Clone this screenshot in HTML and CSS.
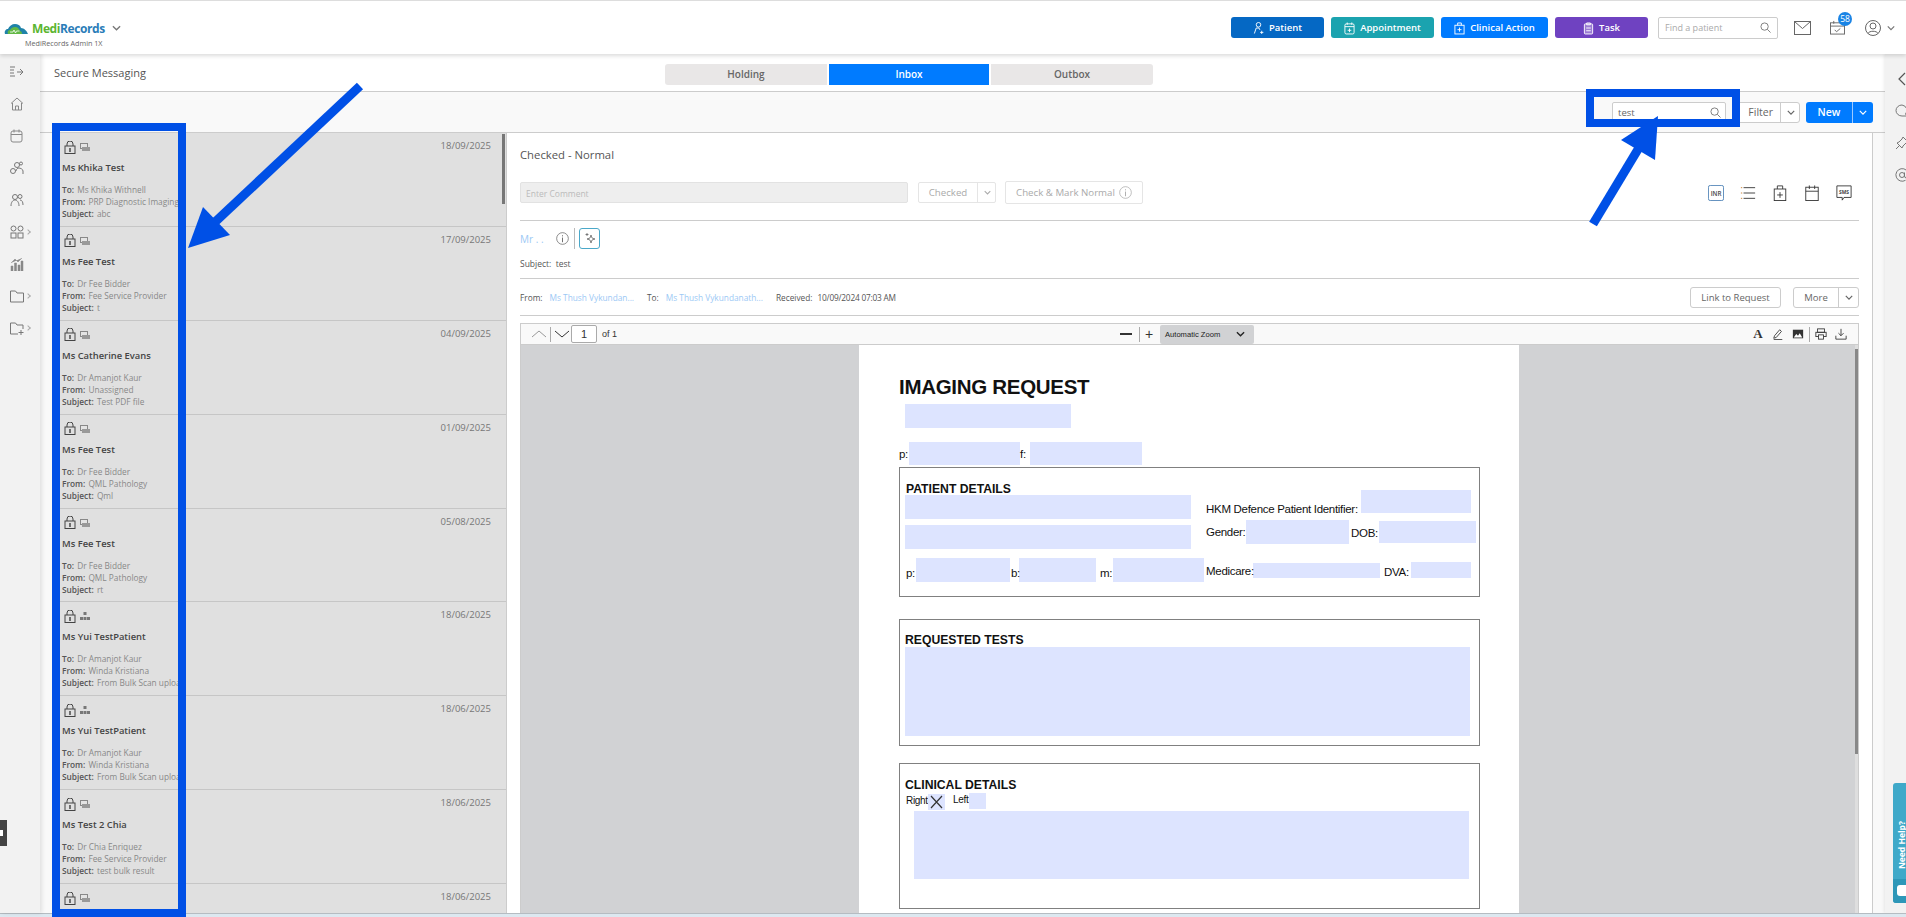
FILE: index.html
```html
<!DOCTYPE html>
<html lang="en">
<head>
    <meta charset="UTF-8">
    <title>MediRecords - Secure Messaging</title>
    <link rel="stylesheet" href="styles.css">
</head>
<body>
    <svg class="defs" width="0" height="0">
        <symbol id="i-lock" viewBox="0 0 12 13">
            <path d="M3 5V3a3 3 0 0 1 6 0v2" fill="none" stroke="#444"/>
            <rect x="1" y="5" width="10" height="7.5" fill="none" stroke="#444"/>
            <path d="M6 7v4" stroke="#222" stroke-width="1.2"/>
        </symbol>
        <symbol id="i-doc" viewBox="0 0 10 8">
            <rect x="0.5" y="0.5" width="7" height="5" fill="#e4e4e4" stroke="#888"/>
            <rect x="2" y="4" width="8" height="4" fill="#999"/>
        </symbol>
        <symbol id="i-net" viewBox="0 0 10 8">
            <path d="M3.5 0h3v3h-3zM0 5h3v3H0zM3.5 5h3v3h-3zM7 5h3v3H7z" fill="#777"/>
        </symbol>
        <symbol id="i-down" viewBox="0 0 10 6">
            <path d="M1 1l4 4 4-4" fill="none" stroke="currentColor" stroke-width="1.5"/>
        </symbol>
        <symbol id="i-search" viewBox="0 0 12 12">
            <circle cx="5" cy="5" r="4" fill="none" stroke="#777"/>
            <path d="M8 8l3.5 3.5" stroke="#777"/>
        </symbol>
        <symbol id="i-info" viewBox="0 0 14 14">
            <circle cx="7" cy="7" r="6.3" fill="none" stroke="currentColor" stroke-width="0.8"/>
            <path d="M7 6v5M7 3.5v1.2" stroke="currentColor"/>
        </symbol>
    </svg>

    <header class="topbar">
        <div class="brand">
            <div class="brand-row">
                <svg class="brand-cloud" viewBox="0 0 24 13">
                    <path d="M1 12c-1-3 1-5 3-5 1-3 4-5 7-5 3 0 5 1 6 4 3 0 6 3 7 6z" fill="#1f82a8"/>
                    <path d="M4 12c-1-2 0-4 2-4 1-2 3-3 5-3 3 0 4 2 5 4 1 0 2 1 2 3z" fill="#62b845"/>
                    <path d="M6 10h3l1-2 1.5 3 1-2h3" fill="none" stroke="#fff" stroke-width="0.8"/>
                </svg>
                <span class="brand-name"><span class="brand-medi">Medi</span>Records</span>
                <svg class="brand-down"><use href="#i-down"/></svg>
            </div>
            <div class="brand-sub">MediRecords Admin 1X</div>
        </div>

        <div class="top-actions">
            <button class="top-btn btn-patient">
                <svg viewBox="0 0 12 14"><circle cx="6" cy="3.5" r="2.5" fill="none" stroke="#fff"/><path d="M1.5 13l2-6h3l1 2M9.5 10v3.5M7.8 11.8h3.5" fill="none" stroke="#fff"/></svg>
                Patient
            </button>
            <button class="top-btn btn-appointment">
                <svg viewBox="0 0 12 14"><rect x="1" y="2.5" width="10" height="11" rx="1.5" fill="none" stroke="#fff"/><path d="M1 5.5h10M3.5 1v2.5M8.5 1v2.5M6 7.5v4M4 9.5h4" fill="none" stroke="#fff"/></svg>
                Appointment
            </button>
            <button class="top-btn btn-clinical">
                <svg viewBox="0 0 12 14"><rect x="1" y="4" width="10" height="9.5" fill="none" stroke="#fff"/><path d="M4 4V1.5h4V4M6 6.5V11M3.8 8.8h4.4" fill="none" stroke="#fff"/></svg>
                Clinical Action
            </button>
            <button class="top-btn btn-task">
                <svg viewBox="0 0 12 14"><rect x="1.5" y="2.5" width="9" height="11" rx="1" fill="#dcd0f0" fill-opacity="0.4" stroke="#fff"/><path d="M4 1.5h4v2H4zM3.5 7h5M3.5 10h5" fill="none" stroke="#fff"/></svg>
                Task
            </button>
            <div class="find">
                <span class="find-text">Find a patient</span>
                <svg class="find-icon"><use href="#i-search"/></svg>
            </div>
            <svg class="top-icon icon-mail" viewBox="0 0 17 14"><rect x="0.5" y="0.5" width="16" height="13" fill="none" stroke="#666"/><path d="M0.5 0.5l8 7 8-7" fill="none" stroke="#666"/></svg>
            <div class="tasks">
                <svg class="top-icon icon-cal" viewBox="0 0 16 15"><rect x="0.5" y="2.5" width="15" height="12" fill="none" stroke="#666"/><path d="M0.5 6h15M4 0.5v3M11 0.5v3M5 10l2 2 4-3.5" fill="none" stroke="#666"/></svg>
                <span class="badge">58</span>
            </div>
            <svg class="top-icon icon-user" viewBox="0 0 16 16"><circle cx="8" cy="8" r="7.5" fill="none" stroke="#666"/><circle cx="8" cy="6" r="3" fill="none" stroke="#666"/><path d="M3 13.5c1-3 9-3 10 0" fill="none" stroke="#666"/></svg>
            <svg class="user-down"><use href="#i-down"/></svg>
        </div>
    </header>

    <div class="middle">
        <nav class="sidebar">
            <svg class="side-icon" viewBox="0 0 14 12"><path d="M0 1h5M0 4h4M0 7h4M0 10h5M7 6h6M10 3l3 3-3 3" fill="none" stroke="#777"/></svg>
            <svg class="side-icon" viewBox="0 0 14 14"><path d="M1 6.5L7 1l6 5.5M2.5 6v7h9V6M5.5 13V9h3v4" fill="none" stroke="#888"/></svg>
            <svg class="side-icon" viewBox="0 0 14 14"><rect x="1" y="2" width="11" height="11" rx="2" fill="none" stroke="#888"/><path d="M1 5.5h11M4 0.5v3M9 0.5v3" fill="none" stroke="#888"/></svg>
            <svg class="side-icon" viewBox="0 0 14 14"><circle cx="3" cy="10" r="2.5" fill="none" stroke="#777"/><circle cx="7" cy="4" r="2.5" fill="none" stroke="#777"/><circle cx="11" cy="2.5" r="1.5" fill="none" stroke="#777"/><path d="M6 10c0-2 2-3 3-3s4 1 4 3v3" fill="none" stroke="#777"/></svg>
            <svg class="side-icon" viewBox="0 0 14 14"><circle cx="5" cy="4" r="2.5" fill="none" stroke="#777"/><circle cx="10" cy="3.5" r="2" fill="none" stroke="#777"/><path d="M1 13c0-4 2-6 4-6s4 2 4 6M10 7c2 0 3 2 3 5" fill="none" stroke="#777"/></svg>
            <div class="side-more">
                <svg class="side-icon" viewBox="0 0 14 14"><circle cx="3.5" cy="3.5" r="2.5" fill="none" stroke="#777"/><circle cx="10.5" cy="3.5" r="2.5" fill="none" stroke="#777"/><rect x="1" y="8" width="5" height="5" fill="none" stroke="#777"/><rect x="8" y="8" width="5" height="5" fill="none" stroke="#777"/></svg>
                <span class="side-arrow"></span>
            </div>
            <svg class="side-icon" viewBox="0 0 14 14"><path d="M1 9h2v5H1zM4.5 6h2v8h-2zM8 8h2v6H8zM11 4h2v10h-2zM1 6l4-4 3 3 4-4" fill="#888" stroke="#888" stroke-width="0.5"/></svg>
            <div class="side-more">
                <svg class="side-icon" viewBox="0 0 14 14"><path d="M0.5 2h5L7 4h6.5v9H0.5z" fill="none" stroke="#777"/></svg>
                <span class="side-arrow"></span>
            </div>
            <div class="side-more">
                <svg class="side-icon" viewBox="0 0 14 14"><path d="M0.5 2h5L7 4h6v4M8 13H0.5V2M11 9v5M8.5 11.5h5" fill="none" stroke="#777"/></svg>
                <span class="side-arrow"></span>
            </div>
        </nav>

        <main class="content">
            <div class="page-head">
                <h1 class="page-title">Secure Messaging</h1>
                <div class="tabs">
                    <div class="tab">Holding</div>
                    <div class="tab tab-active">Inbox</div>
                    <div class="tab">Outbox</div>
                </div>
            </div>

            <div class="toolbar">
                <div class="search">
                    <span>test</span>
                    <svg class="find-icon"><use href="#i-search"/></svg>
                </div>
                <div class="split-btn btn-filter">
                    <span class="split-label">Filter</span>
                    <span class="split-arrow"><svg><use href="#i-down"/></svg></span>
                </div>
                <div class="split-btn btn-new">
                    <span class="split-label">New</span>
                    <span class="split-arrow"><svg><use href="#i-down"/></svg></span>
                </div>
            </div>

            <div class="split">
                <section class="msg-list">
                    <article class="msg">
                        <div class="msg-top">
                            <span class="msg-icons"><svg class="ic-lock"><use href="#i-lock"/></svg><svg class="ic-kind"><use href="#i-doc"/></svg></span>
                            <span class="msg-date">18/09/2025</span>
                        </div>
                        <div class="msg-name">Ms Khika Test</div>
                        <div class="msg-lines">
                            <div><b>To:</b> Ms Khika Withnell</div>
                            <div><b>From:</b> PRP Diagnostic Imaging</div>
                            <div><b>Subject:</b> abc</div>
                        </div>
                    </article>
                    <article class="msg">
                        <div class="msg-top">
                            <span class="msg-icons"><svg class="ic-lock"><use href="#i-lock"/></svg><svg class="ic-kind"><use href="#i-doc"/></svg></span>
                            <span class="msg-date">17/09/2025</span>
                        </div>
                        <div class="msg-name">Ms Fee Test</div>
                        <div class="msg-lines">
                            <div><b>To:</b> Dr Fee Bidder</div>
                            <div><b>From:</b> Fee Service Provider</div>
                            <div><b>Subject:</b> t</div>
                        </div>
                    </article>
                    <article class="msg">
                        <div class="msg-top">
                            <span class="msg-icons"><svg class="ic-lock"><use href="#i-lock"/></svg><svg class="ic-kind"><use href="#i-doc"/></svg></span>
                            <span class="msg-date">04/09/2025</span>
                        </div>
                        <div class="msg-name">Ms Catherine Evans</div>
                        <div class="msg-lines">
                            <div><b>To:</b> Dr Amanjot Kaur</div>
                            <div><b>From:</b> Unassigned</div>
                            <div><b>Subject:</b> Test PDF file</div>
                        </div>
                    </article>
                    <article class="msg">
                        <div class="msg-top">
                            <span class="msg-icons"><svg class="ic-lock"><use href="#i-lock"/></svg><svg class="ic-kind"><use href="#i-doc"/></svg></span>
                            <span class="msg-date">01/09/2025</span>
                        </div>
                        <div class="msg-name">Ms Fee Test</div>
                        <div class="msg-lines">
                            <div><b>To:</b> Dr Fee Bidder</div>
                            <div><b>From:</b> QML Pathology</div>
                            <div><b>Subject:</b> Qml</div>
                        </div>
                    </article>
                    <article class="msg">
                        <div class="msg-top">
                            <span class="msg-icons"><svg class="ic-lock"><use href="#i-lock"/></svg><svg class="ic-kind"><use href="#i-doc"/></svg></span>
                            <span class="msg-date">05/08/2025</span>
                        </div>
                        <div class="msg-name">Ms Fee Test</div>
                        <div class="msg-lines">
                            <div><b>To:</b> Dr Fee Bidder</div>
                            <div><b>From:</b> QML Pathology</div>
                            <div><b>Subject:</b> rt</div>
                        </div>
                    </article>
                    <article class="msg">
                        <div class="msg-top">
                            <span class="msg-icons"><svg class="ic-lock"><use href="#i-lock"/></svg><svg class="ic-kind"><use href="#i-net"/></svg></span>
                            <span class="msg-date">18/06/2025</span>
                        </div>
                        <div class="msg-name">Ms Yui TestPatient</div>
                        <div class="msg-lines">
                            <div><b>To:</b> Dr Amanjot Kaur</div>
                            <div><b>From:</b> Winda Kristiana</div>
                            <div><b>Subject:</b> From Bulk Scan upload</div>
                        </div>
                    </article>
                    <article class="msg">
                        <div class="msg-top">
                            <span class="msg-icons"><svg class="ic-lock"><use href="#i-lock"/></svg><svg class="ic-kind"><use href="#i-net"/></svg></span>
                            <span class="msg-date">18/06/2025</span>
                        </div>
                        <div class="msg-name">Ms Yui TestPatient</div>
                        <div class="msg-lines">
                            <div><b>To:</b> Dr Amanjot Kaur</div>
                            <div><b>From:</b> Winda Kristiana</div>
                            <div><b>Subject:</b> From Bulk Scan upload</div>
                        </div>
                    </article>
                    <article class="msg">
                        <div class="msg-top">
                            <span class="msg-icons"><svg class="ic-lock"><use href="#i-lock"/></svg><svg class="ic-kind"><use href="#i-doc"/></svg></span>
                            <span class="msg-date">18/06/2025</span>
                        </div>
                        <div class="msg-name">Ms Test 2 Chia</div>
                        <div class="msg-lines">
                            <div><b>To:</b> Dr Chia Enriquez</div>
                            <div><b>From:</b> Fee Service Provider</div>
                            <div><b>Subject:</b> test bulk result</div>
                        </div>
                    </article>
                    <article class="msg">
                        <div class="msg-top">
                            <span class="msg-icons"><svg class="ic-lock"><use href="#i-lock"/></svg><svg class="ic-kind"><use href="#i-doc"/></svg></span>
                            <span class="msg-date">18/06/2025</span>
                        </div>
                    </article>
                    <div class="list-scroll"></div>
                </section>

                <section class="detail">
                    <div class="status">Checked - Normal</div>

                    <div class="comment-row">
                        <div class="comment-input">Enter Comment</div>
                        <div class="ghost-split">
                            <span class="ghost-label">Checked</span>
                            <span class="ghost-arrow"><svg><use href="#i-down"/></svg></span>
                        </div>
                        <div class="ghost-btn">Check &amp; Mark Normal <svg class="ic-info"><use href="#i-info"/></svg></div>
                        <div class="quick-icons">
                            <span class="quick"><svg viewBox="0 0 18 18"><rect x="0.5" y="0.5" width="17" height="17" rx="2" fill="none" stroke="#4a7fb5"/><text x="9" y="12" class="quick-text">INR</text></svg></span>
                            <span class="quick"><svg viewBox="0 0 18 18"><path d="M4 3h13M4 9h13M4 15h13" stroke="#333"/><path d="M1 3h1.5M1 9h1.5M1 15h1.5" stroke="#c77a2a"/></svg></span>
                            <span class="quick"><svg viewBox="0 0 18 18"><rect x="2.5" y="4.5" width="13" height="13" fill="none" stroke="#333"/><path d="M6 4.5V1h6v3.5M9 8v6.5M5.8 11.2h6.4" fill="none" stroke="#333"/></svg></span>
                            <span class="quick"><svg viewBox="0 0 18 18"><rect x="2" y="2.5" width="14" height="15" fill="none" stroke="#333"/><path d="M2 7h14M6 0.5v4M12 0.5v4" fill="none" stroke="#333"/></svg></span>
                            <span class="quick"><svg viewBox="0 0 18 18"><path d="M1 1h16v13H9l-2 3v-3H1z" fill="none" stroke="#333"/><text x="9" y="10" class="quick-sms">SMS</text></svg></span>
                        </div>
                    </div>

                    <div class="sender">
                        <div class="sender-row">
                            <span class="link sender-name">Mr . .</span>
                            <svg class="ic-info ic-sender"><use href="#i-info"/></svg>
                            <span class="sender-sep"></span>
                            <span class="ai-btn">
                                <svg viewBox="0 0 12 14"><path d="M7 3l1 3 3 1-3 1-1 3-1-3-3-1 3-1zM3 1v3M1.5 2.5h3" fill="none" stroke="#555" stroke-width="0.7"/></svg>
                            </span>
                        </div>
                        <div class="sender-subject">Subject: &nbsp;test</div>
                    </div>

                    <div class="from-row">
                        <span>From:</span><span class="link from-to">Ms Thush Vykundan...</span>
                        <span>To:</span><span class="link from-to">Ms Thush Vykundanath...</span>
                        <span>Received:</span><span class="received">10/09/2024 07:03 AM</span>
                        <div class="from-actions">
                            <div class="line-btn">Link to Request</div>
                            <div class="line-split">
                                <span class="line-label">More</span>
                                <span class="line-arrow"><svg><use href="#i-down"/></svg></span>
                            </div>
                        </div>
                    </div>

                    <div class="viewer">
                        <div class="viewer-bar">
                            <svg class="vb-chev"><path d="M1 8l7-6 7 6" fill="none" stroke="#999"/></svg>
                            <span class="vb-sep"></span>
                            <svg class="vb-chev"><path d="M1 2l7 6 7-6" fill="none" stroke="#333"/></svg>
                            <span class="vb-page">1</span>
                            <span class="vb-of">of 1</span>
                            <span class="vb-zoom">
                                <span class="vb-minus"></span>
                                <span class="vb-sep"></span>
                                <span class="vb-plus">+</span>
                                <span class="vb-select">Automatic Zoom<svg><use href="#i-down"/></svg></span>
                            </span>
                            <span class="vb-tools">
                                <span class="vb-a">A</span>
                                <svg viewBox="0 0 14 14"><path d="M3 9l6-7 2 2-6 7-3 1zM2 13.5h10" fill="none" stroke="#333"/></svg>
                                <svg viewBox="0 0 14 14"><rect x="1" y="2" width="12" height="10" fill="#333"/><path d="M2 11l3-4 2 2 2-3 3 5z" fill="#fff"/></svg>
                                <span class="vb-sep"></span>
                                <svg viewBox="0 0 14 14"><rect x="3" y="1" width="8" height="4" fill="none" stroke="#333"/><rect x="1" y="5" width="12" height="5" fill="none" stroke="#333"/><rect x="4" y="8" width="6" height="5" fill="#f9f9f9" stroke="#333"/></svg>
                                <svg viewBox="0 0 14 14"><path d="M7 1v8M4 6l3 3 3-3M1 9v4h12V9" fill="none" stroke="#333"/></svg>
                            </span>
                        </div>
                        <div class="viewer-body">
                            <div class="pdf-page">
                                <h2 class="pdf-title">IMAGING REQUEST</h2>
                                <div class="fld fld-title"></div>
                                <span class="lbl lbl-p">p:</span><div class="fld fld-p"></div>
                                <span class="lbl lbl-f">f:</span><div class="fld fld-f"></div>

                                <div class="pdf-box box-patient"></div>
                                <h3 class="pdf-head head-patient">PATIENT DETAILS</h3>
                                <div class="fld fld-name1"></div>
                                <div class="fld fld-name2"></div>
                                <div class="fld fld-hkm"></div><span class="lbl lbl-hkm">HKM Defence Patient Identifier:</span>
                                <div class="fld fld-gender"></div><span class="lbl lbl-gender">Gender:</span>
                                <div class="fld fld-dob"></div><span class="lbl lbl-dob">DOB:</span>
                                <div class="fld fld-pp"></div><span class="lbl lbl-pp">p:</span>
                                <div class="fld fld-b"></div><span class="lbl lbl-b">b:</span>
                                <div class="fld fld-m"></div><span class="lbl lbl-m">m:</span>
                                <div class="fld fld-medicare"></div><span class="lbl lbl-medicare">Medicare:</span>
                                <div class="fld fld-dva"></div><span class="lbl lbl-dva">DVA:</span>

                                <div class="pdf-box box-tests"></div>
                                <h3 class="pdf-head head-tests">REQUESTED TESTS</h3>
                                <div class="fld fld-tests"></div>

                                <div class="pdf-box box-clinical"></div>
                                <h3 class="pdf-head head-clinical">CLINICAL DETAILS</h3>
                                <span class="lbl lbl-right">Right</span>
                                <div class="fld fld-right"><svg viewBox="0 0 17 16"><path d="M3 2l11 12M14 2L3 14" stroke="#333" stroke-width="1.2"/></svg></div>
                                <span class="lbl lbl-left">Left</span><div class="fld fld-left"></div>
                                <div class="fld fld-clinical"></div>
                            </div>
                            <div class="viewer-scroll"></div>
                        </div>
                    </div>
                </section>
            </div>
        </main>

        <aside class="rail">
            <svg class="rail-icon" viewBox="0 0 10 14"><path d="M8 1L2 7l6 6" fill="none" stroke="#555" stroke-width="1.2"/></svg>
            <svg class="rail-icon" viewBox="0 0 14 14"><path d="M7 1a6 5.5 0 1 0 0 11h5l-1.5-2A6 5.5 0 0 0 7 1z" fill="none" stroke="#777"/></svg>
            <svg class="rail-icon" viewBox="0 0 14 14"><path d="M8 1l5 5-2 1-3 3-1 2-5-5 2-1 3-3zM4 10l-3 3" fill="none" stroke="#777"/></svg>
            <svg class="rail-icon" viewBox="0 0 14 14"><circle cx="7" cy="7" r="2.5" fill="none" stroke="#777"/><path d="M9.5 4.5V8a2 2 0 0 0 4 0V7a6.3 6.3 0 1 0-3 5.3" fill="none" stroke="#777"/></svg>
        </aside>
    </div>

    <div class="bottom-strip"></div>

    <div class="side-tab"><svg viewBox="0 0 4 10"><path d="M0 2h3v6H0z" fill="#fff"/></svg></div>
    <div class="help-tab">
        <span class="help-text">Need Help?</span>
        <span class="help-foot"><span class="help-dot"></span></span>
    </div>

    <!-- blue annotations drawn over the screenshot -->
    <svg class="notes" viewBox="0 0 1906 917">
        <rect class="note-frame" x="56" y="127" width="126" height="786"/>
        <path class="note-line" d="M360 86L214 223"/>
        <polygon class="note-head" points="188,248 203,207 230,235"/>
        <rect class="note-frame" x="1590" y="93" width="146" height="30"/>
        <path class="note-line" d="M1593 224L1640 146"/>
        <polygon class="note-head" points="1658,116 1621,140 1655,160"/>
    </svg>
</body>
</html>
```

FILE: styles.css
```css
* {
    box-sizing: border-box;
}
html, body {
    height: 100%;
}
body {
    margin: 0;
    display: flex;
    flex-direction: column;
    position: relative;
    overflow: hidden;
    font-family: 'Open Sans', sans-serif;
    color: #444;
    background-color: #fff;
}
.defs {
    position: absolute;
}
h1, h2, h3 {
    margin: 0;
}

/* top bar */
.topbar {
    height: 54px;
    flex: none;
    display: flex;
    justify-content: space-between;
    background-color: #fff;
    border-top: 1px solid #ddd;
    box-shadow: 0 2px 4px rgba(0, 0, 0, 0.14);
    position: relative;
    z-index: 3;
}
.brand {
    padding: 17px 0 0 4px;
}
.brand-row {
    display: flex;
    align-items: center;
    height: 20px;
}
.brand-cloud {
    width: 24px;
    height: 13px;
}
.brand-name {
    margin-left: 4px;
    font-size: 12px;
    font-weight: 700;
    letter-spacing: -0.4px;
    color: #2a7db8;
}
.brand-medi {
    color: #5cb531;
}
.brand-down {
    width: 9px;
    height: 6px;
    margin-left: 7px;
    color: #777;
}
.brand-sub {
    margin-left: 21px;
    font-size: 7.2px;
    line-height: 10px;
    color: #666;
}
.top-actions {
    display: flex;
    align-items: center;
    padding-right: 11px;
}
.top-btn {
    height: 21px;
    margin-right: 7px;
    padding: 0;
    display: flex;
    align-items: center;
    justify-content: center;
    gap: 5px;
    border: none;
    border-radius: 3px;
    font-family: inherit;
    font-size: 9.5px;
    font-weight: 600;
    color: #fff;
}
.top-btn svg {
    width: 11px;
    height: 14px;
}
.btn-patient {
    width: 93px;
    background-color: #0568c4;
}
.btn-appointment {
    width: 103px;
    background-color: #1ba3af;
}
.btn-clinical {
    width: 107px;
    background-color: #007bff;
}
.btn-task {
    width: 93px;
    background-color: #6f42c1;
}
.find {
    width: 120px;
    height: 22px;
    margin-left: 3px;
    padding: 0 6px;
    display: flex;
    align-items: center;
    justify-content: space-between;
    border: 1px solid #ccc;
    border-radius: 2px;
}
.find-text {
    font-size: 9px;
    color: #aaa;
}
.find-icon {
    width: 11px;
    height: 11px;
}
.top-icon {
    flex: none;
}
.icon-mail {
    width: 17px;
    height: 14px;
    margin-left: 16px;
}
.tasks {
    position: relative;
    margin-left: 19px;
    height: 15px;
}
.icon-cal {
    width: 15px;
    height: 15px;
    display: block;
}
.badge {
    position: absolute;
    top: -8px;
    left: 8px;
    width: 14px;
    height: 14px;
    border-radius: 50%;
    background-color: #1a84e5;
    color: #fff;
    font-size: 8.5px;
    line-height: 14px;
    text-align: center;
}
.icon-user {
    width: 16px;
    height: 16px;
    margin-left: 20px;
}
.user-down {
    width: 8px;
    height: 6px;
    margin-left: 6px;
    color: #777;
}

/* page body */
.middle {
    flex: 1;
    min-height: 0;
    display: flex;
}
.sidebar {
    width: 40px;
    flex: none;
    padding: 11px 0 0 10px;
    display: flex;
    flex-direction: column;
    gap: 18px;
    background-color: #f2f2f2;
    box-shadow: 2px 0 4px rgba(0, 0, 0, 0.1);
    position: relative;
    z-index: 2;
}
.side-icon {
    width: 14px;
    height: 14px;
    display: block;
    flex: none;
}
.side-more {
    display: flex;
    align-items: center;
    gap: 3px;
}
.side-arrow {
    width: 4px;
    height: 4px;
    margin-left: -1px;
    border-top: 1px solid #aaa;
    border-right: 1px solid #aaa;
    transform: rotate(45deg);
}
.content {
    flex: 1;
    min-width: 0;
    display: flex;
    flex-direction: column;
    background-color: #f9f9f9;
}
.page-head {
    height: 38px;
    flex: none;
    padding: 10px 0 0 14px;
    display: grid;
    grid-template-columns: 611px 488px;
    align-items: start;
    background-color: #fff;
    border-bottom: 1px solid #ccc;
}
.page-title {
    font-size: 11px;
    font-weight: 400;
    line-height: 18px;
    color: #555;
}
.tabs {
    display: grid;
    grid-template-columns: 162px 160px 162px;
    gap: 2px;
}
.tab {
    height: 21px;
    font-size: 10px;
    font-weight: 600;
    line-height: 21px;
    text-align: center;
    color: #666;
    background-color: #e9e7e7;
}
.tab:first-child {
    border-radius: 3px 0 0 3px;
}
.tab:last-child {
    border-radius: 0 3px 3px 0;
}
.tab-active {
    color: #fff;
    background-color: #007bff;
}
.toolbar {
    height: 41px;
    flex: none;
    padding: 10px 12px 0 0;
    display: flex;
    justify-content: flex-end;
    gap: 6px;
    border-bottom: 1px solid #ccc;
}
.search {
    width: 114px;
    height: 21px;
    margin-right: 2px;
    padding: 0 4px 0 5px;
    display: flex;
    align-items: center;
    justify-content: space-between;
    font-size: 9.5px;
    color: #666;
    background-color: #fff;
    border: 1px solid #ccc;
    border-radius: 2px;
}
.split-btn {
    height: 21px;
    display: flex;
    align-items: center;
    border-radius: 3px;
    font-size: 10.5px;
}
.split-arrow svg {
    display: block;
    width: 8px;
    height: 5px;
}
.btn-filter {
    width: 66px;
    color: #666;
    background-color: #fff;
    border: 1px solid #ccc;
}
.btn-filter .split-label {
    width: 46px;
    text-align: right;
    padding-right: 7px;
    border-right: 1px solid #ccc;
    line-height: 19px;
}
.btn-filter .split-arrow {
    padding-left: 6px;
    color: #666;
}
.btn-new {
    width: 67px;
    font-weight: 600;
    color: #fff;
    background-color: #007bff;
}
.btn-new .split-label {
    width: 47px;
    text-align: center;
    border-right: 1px solid #9cc9ff;
    line-height: 21px;
}
.btn-new .split-arrow {
    padding-left: 6px;
}

/* message list */
.split {
    flex: 1;
    min-height: 0;
    display: flex;
    padding: 0 12px;
}
.msg-list {
    width: 454px;
    flex: none;
    position: relative;
    overflow: hidden;
    background-color: #e0e0e0;
}
.msg {
    height: 93.9px;
    padding: 7px 15px 0 10px;
    border-bottom: 1px solid #c6c6c6;
}
.msg-top {
    height: 14px;
    display: flex;
    align-items: center;
    justify-content: space-between;
}
.msg-icons {
    display: flex;
    align-items: center;
    gap: 4px;
    padding-left: 2px;
}
.ic-lock {
    width: 12px;
    height: 13px;
}
.ic-kind {
    width: 10px;
    height: 8px;
}
.msg-date {
    margin-top: -3px;
    font-size: 9.5px;
    color: #777;
}
.msg-name {
    margin-top: 6px;
    font-size: 9.4px;
    font-weight: 600;
    line-height: 16px;
    color: #444;
}
.msg-lines {
    margin-top: 8px;
    font-size: 8.3px;
    line-height: 12px;
    color: #888;
    white-space: nowrap;
}
.msg-lines b {
    margin-right: 1px;
    font-weight: 600;
    color: #555;
}
.list-scroll {
    position: absolute;
    top: 1px;
    right: 1px;
    width: 3px;
    height: 70px;
    background-color: #777;
}

/* message detail */
.detail {
    flex: 1;
    min-width: 0;
    padding: 0 13px;
    display: flex;
    flex-direction: column;
    background-color: #fff;
    border-left: 1px solid #ccc;
    border-right: 1px solid #ccc;
}
.status {
    padding-top: 14px;
    font-size: 11.3px;
    line-height: 16px;
    color: #555;
}
.comment-row {
    margin-top: 18px;
    padding-bottom: 16px;
    display: flex;
    align-items: center;
    border-bottom: 1px solid #ccc;
}
.comment-input {
    width: 388px;
    height: 21px;
    padding-left: 5px;
    font-size: 8.5px;
    line-height: 21px;
    color: #bbb;
    background-color: #eee;
    border: 1px solid #e2e2e2;
    border-radius: 2px;
}
.ghost-split {
    width: 78px;
    height: 21px;
    margin-left: 10px;
    display: flex;
    align-items: center;
    font-size: 9.7px;
    color: #aaa;
    border: 1px solid #e5e5e5;
    border-radius: 2px;
}
.ghost-label {
    width: 59px;
    text-align: center;
    line-height: 19px;
    border-right: 1px solid #e5e5e5;
}
.ghost-arrow {
    padding-left: 6px;
}
.ghost-arrow svg {
    display: block;
    width: 7px;
    height: 5px;
}
.ghost-btn {
    width: 138px;
    height: 23px;
    margin-left: 9px;
    display: flex;
    align-items: center;
    justify-content: center;
    gap: 4px;
    font-size: 9.7px;
    color: #aaa;
    border: 1px solid #e5e5e5;
    border-radius: 2px;
}
.ic-info {
    width: 13px;
    height: 13px;
}
.quick-icons {
    margin-left: auto;
    margin-right: -1px;
    display: flex;
}
.quick {
    width: 32px;
    display: flex;
    justify-content: center;
}
.quick svg {
    width: 16px;
    height: 16px;
}
.quick-text {
    font-size: 7px;
    font-weight: 600;
    text-anchor: middle;
    fill: #444;
}
.quick-sms {
    font-size: 5.5px;
    font-weight: 700;
    text-anchor: middle;
    fill: #444;
}
.link {
    color: #9cc9f5;
}
.sender {
    padding: 7px 0;
    border-bottom: 1px solid #ccc;
}
.sender-row {
    height: 21px;
    display: flex;
    align-items: center;
}
.sender-name {
    width: 36px;
    font-size: 10px;
}
.ic-sender {
    color: #666;
}
.sender-sep {
    width: 1px;
    height: 21px;
    margin: 0 4px 0 5px;
    background-color: #bbb;
}
.ai-btn {
    width: 21px;
    height: 21px;
    display: flex;
    align-items: center;
    justify-content: center;
    border: 1px solid #4ba8c9;
    border-radius: 3px;
}
.ai-btn svg {
    width: 12px;
    height: 14px;
}
.sender-subject {
    margin-top: 8px;
    font-size: 8.5px;
    line-height: 14px;
    color: #555;
}
.from-row {
    height: 37px;
    flex: none;
    display: flex;
    align-items: center;
    font-size: 8.3px;
    color: #555;
    border-bottom: 1px solid #ccc;
}
.from-to {
    margin: 0 13px 0 7px;
}
.received {
    margin-left: 5px;
    letter-spacing: -0.2px;
}
.from-actions {
    margin-left: auto;
    display: flex;
    gap: 12px;
    font-size: 9.5px;
    color: #666;
}
.line-btn {
    width: 91px;
    height: 21px;
    line-height: 19px;
    text-align: center;
    border: 1px solid #ccc;
    border-radius: 3px;
}
.line-split {
    width: 66px;
    height: 21px;
    display: flex;
    align-items: center;
    border: 1px solid #ccc;
    border-radius: 3px;
}
.line-label {
    width: 45px;
    line-height: 19px;
    text-align: center;
    border-right: 1px solid #ccc;
}
.line-arrow {
    padding-left: 6px;
}
.line-arrow svg {
    display: block;
    width: 8px;
    height: 5px;
}

/* pdf viewer */
.viewer {
    flex: 1;
    min-height: 0;
    margin-top: 7px;
    display: flex;
    flex-direction: column;
    border-left: 1px solid #ccc;
    border-right: 1px solid #ccc;
}
.viewer-bar {
    height: 22px;
    flex: none;
    padding-left: 10px;
    display: flex;
    align-items: center;
    background-color: #f9f9f9;
    border-top: 1px solid #ccc;
    border-bottom: 1px solid #ccc;
}
.vb-chev {
    width: 16px;
    height: 10px;
}
.vb-sep {
    width: 1px;
    height: 15px;
    margin: 0 3px;
    background-color: #aaa;
}
.vb-page {
    width: 26px;
    height: 18px;
    margin-left: 1px;
    font-family: 'Liberation Sans', sans-serif;
    font-size: 11px;
    line-height: 16px;
    text-align: center;
    color: #333;
    background-color: #fff;
    border: 1px solid #aaa;
    border-radius: 2px;
}
.vb-of {
    margin-left: 5px;
    font-family: 'Liberation Sans', sans-serif;
    font-size: 9px;
    color: #333;
}
.vb-zoom {
    position: absolute;
    left: 1120px;
    display: flex;
    align-items: center;
    font-family: 'Liberation Sans', sans-serif;
}
.vb-minus {
    width: 12px;
    height: 1.5px;
    margin-right: 4px;
    background-color: #333;
}
.vb-plus {
    width: 12px;
    font-size: 14px;
    line-height: 14px;
    text-align: center;
    color: #333;
}
.vb-select {
    width: 94px;
    height: 19px;
    margin-left: 5px;
    padding: 0 5px;
    display: flex;
    align-items: center;
    justify-content: space-between;
    font-size: 7.6px;
    color: #222;
    background-color: #d1d2d4;
    border-radius: 2px;
}
.vb-select svg {
    width: 9px;
    height: 6px;
    margin-right: 4px;
    color: #222;
}
.vb-tools {
    margin-left: auto;
    margin-right: 11px;
    display: flex;
    align-items: center;
    gap: 8px;
}
.vb-tools .vb-sep {
    margin: 0 -3px;
}
.vb-tools svg {
    width: 12px;
    height: 12px;
}
.vb-a {
    width: 12px;
    font-family: 'Liberation Serif', serif;
    font-size: 13px;
    font-weight: 700;
    line-height: 14px;
    text-align: center;
    color: #333;
}
.viewer-body {
    flex: 1;
    min-height: 0;
    padding-left: 338px;
    position: relative;
    overflow: hidden;
    background-color: #d1d2d4;
}
.viewer-scroll {
    position: absolute;
    top: 0;
    right: 0;
    width: 3px;
    height: 100%;
    background-color: #dedede;
}
.viewer-scroll::before {
    content: "";
    display: block;
    margin-top: 4px;
    height: 405px;
    background-color: #888;
}
.pdf-page {
    width: 660px;
    height: 620px;
    position: relative;
    font-family: 'Liberation Sans', sans-serif;
    color: #111;
    background-color: #fff;
}

/* everything on the pdf sheet sits at its own spot, offsets from the sheet's corner */
.fld, .lbl, .pdf-head, .pdf-box, .pdf-title {
    position: absolute;
}
.fld {
    background-color: #dde4ff;
}
.fld svg {
    display: block;
    width: 100%;
    height: 100%;
}
.lbl {
    font-size: 11.5px;
    line-height: 14px;
    letter-spacing: -0.3px;
}
.pdf-box {
    left: 40px;
    width: 581px;
    border: 1px solid #808080;
}
.pdf-title {
    left: 40px;
    top: 29px;
    font-size: 20.5px;
    font-weight: 700;
    line-height: 26px;
    letter-spacing: -0.3px;
    white-space: nowrap;
}
.pdf-head {
    font-size: 12.2px;
    font-weight: 700;
    line-height: 14px;
    white-space: nowrap;
}
.fld-title { left: 46px; top: 59px; width: 166px; height: 24px; }
.lbl-p { left: 40px; top: 102px; }
.fld-p { left: 50px; top: 97px; width: 111px; height: 23px; }
.lbl-f { left: 161px; top: 102px; }
.fld-f { left: 171px; top: 97px; width: 112px; height: 23px; }

.box-patient { top: 122px; height: 130px; }
.head-patient { left: 47px; top: 137px; }
.fld-name1 { left: 46px; top: 150px; width: 286px; height: 24px; }
.fld-name2 { left: 46px; top: 180px; width: 286px; height: 24px; }
.lbl-hkm { left: 347px; top: 157px; }
.fld-hkm { left: 502px; top: 145px; width: 110px; height: 23px; }
.lbl-gender { left: 347px; top: 180px; }
.fld-gender { left: 387px; top: 175px; width: 103px; height: 24px; }
.lbl-dob { left: 492px; top: 181px; }
.fld-dob { left: 520px; top: 176px; width: 97px; height: 22px; }
.lbl-pp { left: 47px; top: 221px; }
.fld-pp { left: 57px; top: 213px; width: 94px; height: 24px; }
.lbl-b { left: 152px; top: 221px; }
.fld-b { left: 160px; top: 213px; width: 77px; height: 24px; }
.lbl-m { left: 241px; top: 221px; }
.fld-m { left: 254px; top: 213px; width: 91px; height: 24px; }
.lbl-medicare { left: 347px; top: 219px; }
.fld-medicare { left: 394px; top: 218px; width: 127px; height: 15px; }
.lbl-dva { left: 525px; top: 220px; }
.fld-dva { left: 552px; top: 217px; width: 60px; height: 16px; }

.box-tests { top: 274px; height: 127px; }
.head-tests { left: 46px; top: 288px; }
.fld-tests { left: 46px; top: 302px; width: 565px; height: 89px; }

.box-clinical { top: 418px; height: 146px; }
.head-clinical { left: 46px; top: 433px; }
.lbl-right { left: 47px; top: 449px; font-size: 10px; }
.fld-right { left: 69px; top: 449px; width: 17px; height: 16px; }
.lbl-left { left: 94px; top: 448px; font-size: 10px; }
.fld-left { left: 110px; top: 448px; width: 17px; height: 16px; }
.fld-clinical { left: 55px; top: 466px; width: 555px; height: 68px; }

/* right rail */
.rail {
    width: 21px;
    flex: none;
    padding: 18px 0 0 10px;
    display: flex;
    flex-direction: column;
    gap: 18px;
    overflow: hidden;
    background-color: #f2f2f2;
    box-shadow: -1px 0 3px rgba(0, 0, 0, 0.08);
}
.rail-icon {
    width: 14px;
    height: 14px;
    flex: none;
}
.bottom-strip {
    height: 4px;
    flex: none;
    background-color: #dce8f0;
    border-top: 1px solid #b5bcc2;
}

/* floating things */
.side-tab {
    position: absolute;
    left: 0;
    top: 820px;
    width: 7px;
    height: 26px;
    display: flex;
    align-items: center;
    background-color: #444;
    z-index: 4;
}
.side-tab svg {
    width: 4px;
    height: 10px;
}
.help-tab {
    position: absolute;
    right: 0;
    top: 783px;
    width: 13px;
    height: 120px;
    overflow: hidden;
    background-color: #3fa9c9;
    border-radius: 3px 0 0 3px;
    z-index: 4;
}
.help-text {
    position: absolute;
    left: 5px;
    top: 38px;
    writing-mode: vertical-rl;
    transform: rotate(180deg);
    font-size: 8.5px;
    font-weight: 700;
    line-height: 8px;
    white-space: nowrap;
    color: #fff;
}
.help-foot {
    position: absolute;
    left: 0;
    right: 0;
    bottom: 0;
    height: 24px;
    background-color: #2e97b8;
}
.help-dot {
    position: absolute;
    left: 4px;
    top: 6px;
    width: 12px;
    height: 11px;
    border-radius: 3px;
    background-color: #fff;
}
.notes {
    position: absolute;
    left: 0;
    top: 0;
    width: 1906px;
    height: 917px;
    z-index: 5;
    pointer-events: none;
}
.note-frame {
    fill: none;
    stroke: #0050e6;
    stroke-width: 8;
}
.note-line {
    fill: none;
    stroke: #0050e6;
    stroke-width: 9;
}
.note-head {
    fill: #0050e6;
}
```
